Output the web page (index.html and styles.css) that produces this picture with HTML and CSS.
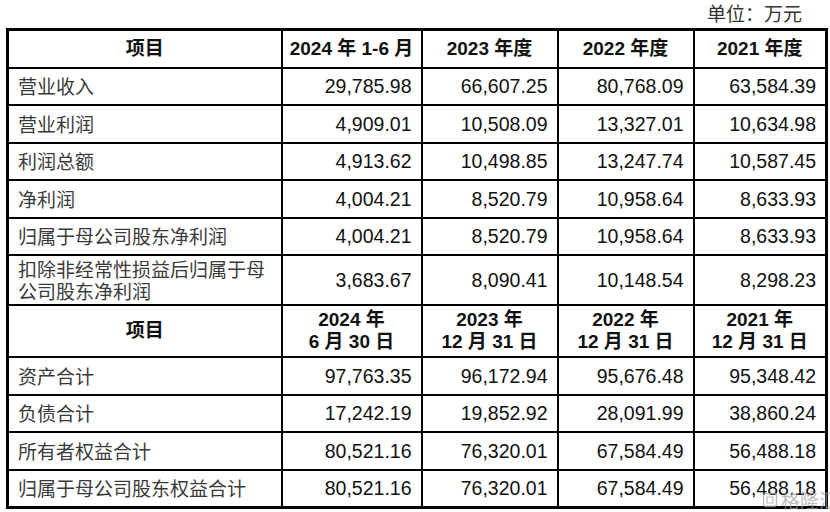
FILE: index.html
```html
<!DOCTYPE html>
<html lang="zh">
<head>
<meta charset="utf-8">
<link rel="stylesheet" href="styles.css">
</head>
<body>
<div class="page">
  <div class="unit">单位：万元</div>
  <table class="fin">
    <colgroup>
      <col class="c1"><col class="c2"><col class="c3"><col class="c4"><col class="c5">
    </colgroup>
    <tr class="head">
      <th>项目</th><th>2024 年 1-6 月</th><th>2023 年度</th><th>2022 年度</th><th>2021 年度</th>
    </tr>
    <tr><td class="name">营业收入</td><td>29,785.98</td><td>66,607.25</td><td>80,768.09</td><td>63,584.39</td></tr>
    <tr><td class="name">营业利润</td><td>4,909.01</td><td>10,508.09</td><td>13,327.01</td><td>10,634.98</td></tr>
    <tr><td class="name">利润总额</td><td>4,913.62</td><td>10,498.85</td><td>13,247.74</td><td>10,587.45</td></tr>
    <tr><td class="name">净利润</td><td>4,004.21</td><td>8,520.79</td><td>10,958.64</td><td>8,633.93</td></tr>
    <tr><td class="name">归属于母公司股东净利润</td><td>4,004.21</td><td>8,520.79</td><td>10,958.64</td><td>8,633.93</td></tr>
    <tr class="tall"><td class="name">扣除非经常性损益后归属于母公司股东净利润</td><td>3,683.67</td><td>8,090.41</td><td>10,148.54</td><td>8,298.23</td></tr>
    <tr class="head head2">
      <th>项目</th><th>2024 年<br>6 月 30 日</th><th>2023 年<br>12 月 31 日</th><th>2022 年<br>12 月 31 日</th><th>2021 年<br>12 月 31 日</th>
    </tr>
    <tr><td class="name">资产合计</td><td>97,763.35</td><td>96,172.94</td><td>95,676.48</td><td>95,348.42</td></tr>
    <tr><td class="name">负债合计</td><td>17,242.19</td><td>19,852.92</td><td>28,091.99</td><td>38,860.24</td></tr>
    <tr><td class="name">所有者权益合计</td><td>80,521.16</td><td>76,320.01</td><td>67,584.49</td><td>56,488.18</td></tr>
    <tr><td class="name">归属于母公司股东权益合计</td><td>80,521.16</td><td>76,320.01</td><td>67,584.49</td><td>56,488.18</td></tr>
  </table>
  <div class="mark">
    <svg class="mark-icon" width="16" height="16" viewBox="0 0 16 16"><rect x="1.5" y="1.5" width="13" height="13" rx="2" fill="none" stroke="currentColor" stroke-width="1.4"/><path d="M5 5h6v6H5z" fill="none" stroke="currentColor" stroke-width="1.2"/></svg>
    <span>格隆汇</span>
  </div>
</div>
</body>
</html>
```

FILE: styles.css
```css
html, body {
  margin: 0;
  padding: 0;
  background: #ffffff;
}
.page {
  position: relative;
  width: 830px;
  height: 512px;
  padding: 0 0 0 6px;
  box-sizing: border-box;
  overflow: hidden;
  font-family: "Liberation Sans", "Noto Sans CJK SC", sans-serif;
  color: #1a1a1a;
}
.unit {
  height: 28px;
  width: 796px;
  text-align: right;
  font-family: "Noto Sans CJK SC", sans-serif;
  font-size: 19px;
  line-height: 26px;
  color: #333;
}
.fin {
  border-collapse: collapse;
  table-layout: fixed;
  width: 819px;
  border: 3px solid #000;
}
.c1 { width: 274px; }
.c2 { width: 140px; }
.c3 { width: 136px; }
.c4 { width: 136px; }
.c5 { width: 133px; }
.fin td, .fin th {
  border: 2px solid #000;
  height: 35.5px;
  padding: 0 9px;
  font-size: 19.5px;
  line-height: 22px;
}
.fin th {
  font-weight: bold;
  text-align: center;
  white-space: nowrap;
  padding: 0 2px;
  font-size: 19px;
  color: #111;
}
.fin td {
  text-align: right;
  color: #111;
}
.fin td.name {
  text-align: left;
  font-family: "Noto Sans CJK SC", sans-serif;
  font-size: 19px;
  color: #3a3a3a;
  padding-left: 9px;
  padding-right: 4px;
}
.fin tr.tall td { height: 48px; }
.fin tr.head2 th { height: 50px; }
.mark {
  position: absolute;
  right: -8px;
  bottom: 1px;
  display: flex;
  align-items: center;
  gap: 3px;
  color: rgba(160, 160, 160, 0.7);
  font-family: "Noto Sans CJK SC", sans-serif;
  font-size: 19px;
  line-height: 22px;
}
.mark-icon { display: block; }
```
